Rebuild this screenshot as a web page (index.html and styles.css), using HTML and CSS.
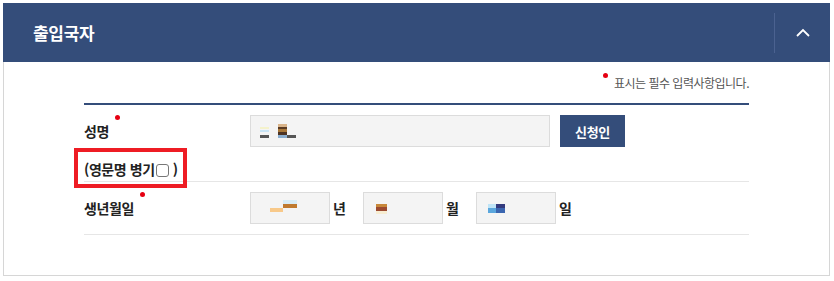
FILE: index.html
```html
<!DOCTYPE html>
<html lang="ko">
<head>
<meta charset="utf-8">
<title>출입국자</title>
<link rel="stylesheet" href="styles.css">
</head>
<body>
<div class="panel">
  <div class="panel-head">
    <h2 class="title">출입국자</h2>
    <span class="divider"></span>
    <button class="toggle" type="button" aria-label="접기">
      <svg width="14" height="9" viewBox="0 0 14 9"><path d="M1 8 L7 2 L13 8" fill="none" stroke="#fff" stroke-width="1.8"/></svg>
    </button>
  </div>
  <div class="panel-body">
    <p class="note"><span class="dot"></span>표시는 필수 입력사항입니다.</p>
    <div class="form">
      <div class="row row-name">
        <div class="label">
          <span class="req">성명</span>
          <span class="sub">(영문명 병기<input class="chk" type="checkbox">)</span>
        </div>
        <div class="field">
          <div class="box box-wide">
            <svg width="36" height="14" viewBox="0 0 36 14">
              <rect x="0" y="3" width="9" height="2" fill="#f4f2cc"/>
              <rect x="0" y="6" width="9" height="2" fill="#c9e5f6"/>
              <rect x="0" y="11" width="9" height="3" fill="#555"/>
              <rect x="18" y="0" width="9" height="3" fill="#d9b48a"/>
              <rect x="18" y="3" width="9" height="2" fill="#5a3a22"/>
              <rect x="18" y="5" width="9" height="3" fill="#a8783a"/>
              <rect x="18" y="8" width="9" height="3" fill="#4e3424"/>
              <rect x="18" y="11" width="9" height="3" fill="#8aaed0"/>
              <rect x="27" y="11" width="9" height="3" fill="#555"/>
            </svg>
          </div>
          <button class="btn" type="button">신청인</button>
        </div>
      </div>
      <div class="row row-birth">
        <div class="label">
          <span class="req">생년월일</span>
        </div>
        <div class="field">
          <div class="box box-year">
            <svg width="27" height="16" viewBox="0 0 27 16">
              <rect x="0" y="8" width="13" height="4" fill="#f8c98a"/>
              <rect x="13" y="0" width="14" height="4" fill="#d8ecf6"/>
              <rect x="13" y="4" width="14" height="4" fill="#c07a30"/>
            </svg>
          </div>
          <span class="unit">년</span>
          <div class="box box-month">
            <svg width="11" height="16" viewBox="0 0 11 16">
              <rect x="0" y="4" width="11" height="3" fill="#c8883a"/>
              <rect x="0" y="7" width="11" height="4" fill="#9c4a30"/>
              <rect x="0" y="11" width="11" height="3" fill="#f7edd2"/>
            </svg>
          </div>
          <span class="unit">월</span>
          <div class="box box-day">
            <svg width="17" height="16" viewBox="0 0 17 16">
              <rect x="0" y="4" width="8" height="4" fill="#bfe4f6"/>
              <rect x="0" y="8" width="8" height="5" fill="#5ba7dd"/>
              <rect x="8" y="4" width="9" height="4" fill="#333a7e"/>
              <rect x="8" y="8" width="9" height="5" fill="#3b66b0"/>
            </svg>
          </div>
          <span class="unit">일</span>
        </div>
      </div>
    </div>
    <span class="highlight"></span>
  </div>
</div>
</body>
</html>
```

FILE: styles.css
```css
* { box-sizing: border-box; }
body {
  margin: 0;
  background: #fff;
  font-family: "Noto Sans CJK KR", "Noto Sans", sans-serif;
  color: #222;
}
.panel {
  margin: 3px 0 0 3px;
  width: 827px;
}
.panel-head {
  height: 59px;
  background: #344d7a;
  display: flex;
  align-items: center;
}
.title {
  flex: 1;
  margin: 0;
  padding-left: 30px;
  font-size: 17px;
  font-weight: 700;
  color: #fff;
  letter-spacing: -0.3px;
}
.divider {
  width: 1px;
  height: 40px;
  background: #4b6290;
}
.toggle {
  width: 55px;
  height: 59px;
  border: 0;
  padding: 0;
  background: transparent;
  display: flex;
  align-items: center;
  justify-content: center;
}
.panel-body {
  position: relative;
  height: 214px;
  border: 1px solid #d6d6d6;
  border-top: 0;
  padding: 0 80px;
}
.note {
  margin: 0 0 10px;
  padding-top: 11px;
  line-height: 20px;
  font-size: 12px;
  color: #555;
  text-align: right;
  letter-spacing: -0.5px;
}
.dot {
  display: inline-block;
  vertical-align: top;
  width: 5px;
  height: 5px;
  border-radius: 50%;
  background: #e60012;
  margin-right: 6px;
}
.form {
  border-top: 2px solid #344d7a;
}
.row {
  display: flex;
  border-bottom: 1px solid #e6e6e6;
}
.row-name { padding: 10px 0 2px; }
.row-birth { padding: 10px 0; }
.label {
  width: 166px;
  display: flex;
  flex-direction: column;
  align-items: flex-start;
  font-size: 14px;
  font-weight: 700;
  letter-spacing: -0.4px;
}
.req {
  position: relative;
  display: inline-block;
  line-height: 32px;
}
.req::after {
  content: "";
  position: absolute;
  top: 0;
  right: -11px;
  width: 5px;
  height: 5px;
  border-radius: 50%;
  background: #e60012;
}
.sub {
  margin-top: 12px;
  line-height: 20px;
  display: inline-flex;
  align-items: center;
}
.chk {
  -webkit-appearance: none;
  appearance: none;
  width: 13px;
  height: 13px;
  margin: 3px 4px 0 1px;
  border: 1px solid #777;
  border-radius: 3px;
  background: #fff;
}
.field {
  display: flex;
  align-items: flex-start;
}
.box {
  flex: none;
  height: 32px;
  background: #f4f4f4;
  border: 1px solid #dcdcdc;
  display: flex;
  align-items: center;
}
.box-wide { width: 300px; padding-left: 9px; }
.box-year { width: 80px; padding-left: 19px; }
.box-month { width: 80px; padding-left: 12px; }
.box-day { width: 80px; padding-left: 11px; }
.btn {
  margin-left: 10px;
  width: 65px;
  height: 32px;
  border: 0;
  background: #344d7a;
  color: #fff;
  font-family: inherit;
  font-size: 13px;
  font-weight: 700;
  letter-spacing: -0.3px;
}
.unit {
  flex: none;
  width: 14px;
  line-height: 32px;
  font-size: 14px;
  font-weight: 700;
  margin: 0 16px 0 3px;
}
.highlight {
  position: absolute;
  left: 70px;
  top: 86px;
  width: 113px;
  height: 40px;
  border: 4px solid #ee1c24;
}
```
